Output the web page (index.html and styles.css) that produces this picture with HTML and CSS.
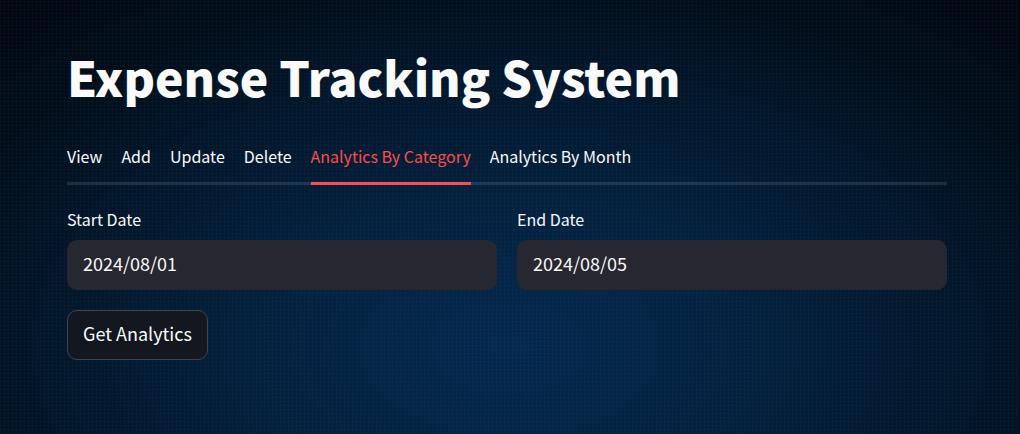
FILE: index.html
```html
<!DOCTYPE html>
<html lang="en">
<head>
<meta charset="utf-8">
<meta name="viewport" content="width=device-width, initial-scale=1">
<title>Expense Tracking System</title>
<link rel="stylesheet" href="styles.css">
</head>
<body class="app">
<main class="container">
  <h1 class="title">Expense Tracking System</h1>
  <div class="tabs" role="tablist">
    <button class="tab" type="button" role="tab" aria-selected="false">View</button>
    <button class="tab" type="button" role="tab" aria-selected="false">Add</button>
    <button class="tab" type="button" role="tab" aria-selected="false">Update</button>
    <button class="tab" type="button" role="tab" aria-selected="false">Delete</button>
    <button class="tab tab-active" type="button" role="tab" aria-selected="true">Analytics By Category</button>
    <button class="tab" type="button" role="tab" aria-selected="false">Analytics By Month</button>
  </div>
  <form class="form">
    <div class="columns">
      <div class="field">
        <label class="label" for="start-date">Start Date</label>
        <input class="input" id="start-date" type="text" value="2024/08/01">
      </div>
      <div class="field">
        <label class="label" for="end-date">End Date</label>
        <input class="input" id="end-date" type="text" value="2024/08/05">
      </div>
    </div>
    <button class="submit" type="button">Get Analytics</button>
  </form>
</main>
</body>
</html>
```
FILE: styles.css
```css
* {
  box-sizing: border-box;
}

.app {
  margin: 0;
  min-height: 100vh;
  padding: 41px 73px 40px 67px;
  color: #fafafa;
  font-family: "Source Sans Pro", "Noto Sans CJK JP", sans-serif;
  background:
    repeating-linear-gradient(90deg, rgba(255, 255, 255, 0.014) 0 1px, transparent 1px 4px),
    repeating-linear-gradient(0deg, rgba(255, 255, 255, 0.014) 0 1px, transparent 1px 4px),
    radial-gradient(ellipse 68% 96% at 50% 80%, #04294f 0%, #032240 32%, #02162b 66%, #010e1a 88%, #010710 112%);
}

.container {
  max-width: 880px;
  margin: 0 auto;
}

.title {
  margin: 0;
  font-size: 48px;
  font-weight: 900;
  line-height: 70px;
}

.tabs {
  display: flex;
  gap: 19px;
  margin-top: 24px;
  box-shadow: inset 0 -3px rgba(250, 250, 250, 0.12);
}

.tab {
  height: 50px;
  padding: 0 0 9px;
  border: 0;
  background: none;
  color: inherit;
  font-family: inherit;
  font-size: 16px;
  line-height: 24px;
  white-space: nowrap;
  cursor: pointer;
}

.tab-active {
  color: #ff4b4b;
  box-shadow: inset 0 -3px #ff4b4b;
}

.form {
  margin-top: 22px;
}

.columns {
  display: grid;
  grid-template-columns: 1fr 1fr;
  gap: 20px;
}

.field {
  display: flex;
  flex-direction: column;
  gap: 9px;
}

.label {
  font-size: 16px;
  line-height: 24px;
}

.input {
  width: 100%;
  height: 50px;
  padding: 0 16px 4px;
  border: 0;
  border-radius: 10px;
  background: #262730;
  color: inherit;
  font-family: inherit;
  font-size: 18px;
}

.submit {
  height: 50px;
  margin-top: 20px;
  padding: 0 15px 4px;
  border: 1px solid #42444b;
  border-radius: 10px;
  background: #131720;
  color: inherit;
  font-family: inherit;
  font-size: 18px;
}
```
